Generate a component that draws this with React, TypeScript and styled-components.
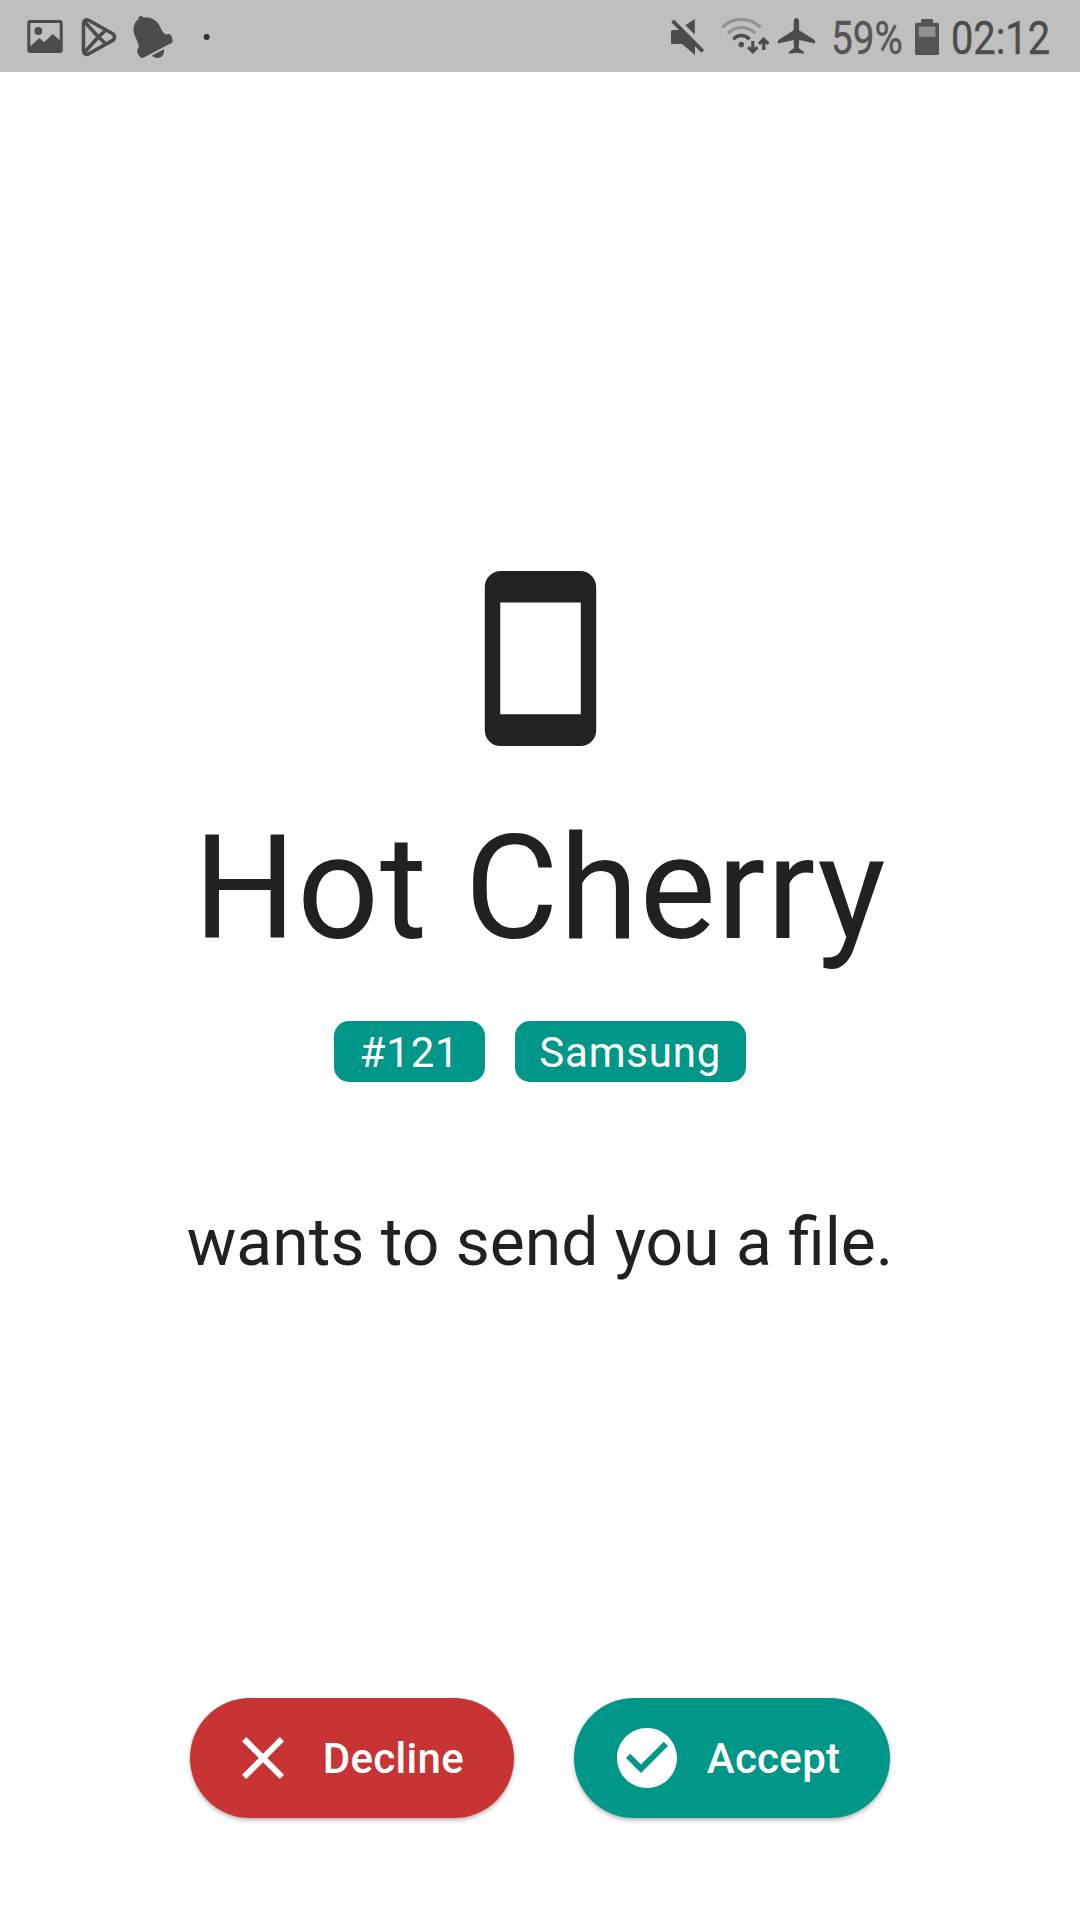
import React from "react";
import styled, { createGlobalStyle } from "styled-components";

const GlobalStyle = createGlobalStyle`
  *, *::before, *::after { box-sizing: border-box; }
  body { margin: 0; background: #fff; }
`;

const Screen = styled.div`
  width: 1080px;
  height: 1920px;
  display: flex;
  flex-direction: column;
  background: #fff;
  color: #212121;
  font-family: Roboto, "Liberation Sans", sans-serif;
  overflow: hidden;
`;

const StatusBar = styled.header`
  height: 72px;
  flex: none;
  display: flex;
  justify-content: space-between;
  padding: 0 30px 0 24px;
  background: #bfbfbf;
  color: #4c4c4c;
`;

const StatusGroup = styled.div`
  display: flex;
  align-items: center;
`;

const StatusGlyph = styled.svg`
  display: block;
  flex: none;
  height: 72px;
`;

const StatusText = styled.span<{ $width: number; $color: string }>`
  width: ${(p) => p.$width}px;
  height: 72px;
  flex: none;
  white-space: nowrap;
  font-size: 46px;
  line-height: 76px;
  color: ${(p) => p.$color};
  -webkit-text-stroke: 0.4px ${(p) => p.$color};
`;

const Condensed = styled.span<{ $scale: number }>`
  display: inline-block;
  transform: scaleX(${(p) => p.$scale});
  transform-origin: 0 50%;
`;

const Content = styled.main`
  flex: 1;
  display: flex;
  flex-direction: column;
  align-items: center;
  padding: 491px 0 102px;
`;

const DeviceIcon = styled.svg`
  display: block;
  flex: none;
  width: 191px;
  height: 191px;
`;

const DeviceName = styled.h1`
  margin: 50px 0 0;
  font-size: 144px;
  font-weight: 400;
  line-height: 169px;
  letter-spacing: 0.9px;
  white-space: nowrap;
`;

const Tags = styled.div`
  display: flex;
  gap: 30px;
  margin-top: 48px;
`;

const Tag = styled.span<{ $width: number }>`
  width: ${(p) => p.$width}px;
  height: 61px;
  display: flex;
  align-items: center;
  justify-content: center;
  padding-top: 2px;
  border-radius: 15px;
  background: #009688;
  color: #fff;
  font-size: 42px;
  letter-spacing: 0.8px;
`;

const Message = styled.p`
  margin: 121px 0 0;
  font-size: 66px;
  line-height: 80px;
  white-space: nowrap;
`;

const Actions = styled.div`
  display: flex;
  gap: 60px;
  margin-top: auto;
`;

const ActionButton = styled.button<{ $color: string; $width: number }>`
  width: ${(p) => p.$width}px;
  height: 120px;
  display: flex;
  align-items: center;
  gap: 24px;
  padding: 0 0 0 36.5px;
  border: 0;
  border-radius: 60px;
  background: ${(p) => p.$color};
  color: #fff;
  font-family: inherit;
  font-size: 42px;
  font-weight: 500;
  letter-spacing: 0.3px;
  white-space: nowrap;
  box-shadow: 0 3px 4px rgba(0, 0, 0, 0.2), 0 1px 3px rgba(0, 0, 0, 0.12);
`;

const ActionIcon = styled.svg`
  display: block;
  flex: none;
  width: 72px;
  height: 72px;
`;

function NotificationIcons() {
  return (
    <>
      <StatusGlyph width="50" viewBox="24 0 50 72" fill="currentColor">
        <rect x="28.8" y="21.5" width="32.4" height="30" rx="1.2" fill="none" stroke="currentColor" strokeWidth="3" />
        <circle cx="38.3" cy="31" r="3.9" />
        <path d="M30 46.6 39.4 38l4.8 4.3 8.4-8.4 8.4 7.4V52H30z" />
      </StatusGlyph>
      <StatusGlyph width="54" viewBox="74 0 54 72" fill="none" stroke="currentColor" strokeWidth="3.6" strokeLinejoin="round">
        <path d="M83.5 23.4c0-3.3 2.6-4.4 5.2-3.1l23.6 13.2c3 1.7 3 5.4 0 7.1L88.7 53.8c-2.6 1.3-5.2.2-5.2-3.1z" />
        <path d="M84.6 21.8 98.4 37l8 7.5M84.6 52.2 98.4 37l8-7.5" />
      </StatusGlyph>
      <StatusGlyph width="62" viewBox="128 0 62 72" fill="currentColor">
        <path d="M138.4 19.2C137.8 15.4 142.7 15.2 143.3 17.6C149.8 16.6 156 19.2 159 24.8C161.6 29.8 162.6 32.6 165.6 34.3C167.2 34.9 168.6 33.4 170.2 34.6C171.4 36 172.8 39.2 172.6 41.2C172.3 43.2 170.5 43.6 168.6 44.5L145.6 56.4C143.4 57.8 141.4 58.7 139.8 56.8C138 54.6 136.8 52 137.2 50C137.8 48.2 139.2 47.4 138.6 45.4C137.8 42.4 136.8 40 135.2 36.6C132 29.4 133.8 22.2 138.4 19.2Z" />
        <path d="M151.9 55.6 164 49.2C164.9 53.4 162.3 57.7 157.9 57.9C155.2 58 153.2 57.2 151.9 55.6Z" />
      </StatusGlyph>
      <StatusGlyph width="34" viewBox="190 0 34 72">
        <circle cx="206.7" cy="37" r="3" fill="#333" />
      </StatusGlyph>
    </>
  );
}

function SystemIcons() {
  return (
    <>
      <StatusGlyph width="50" viewBox="664 0 50 72" fill="currentColor">
        <path d="M694.8 19v15.6l-9.4-9.4z" />
        <path d="M672.5 30h8L695 45v10L682 44h-9.5q-1.5 0-1.5-1.5v-11q0-1.5 1.5-1.5z" />
        <path d="M672.6 20.8 702.8 51.4" stroke="currentColor" strokeWidth="3.8" />
      </StatusGlyph>
      <StatusGlyph width="60" viewBox="714 0 60 72" fill="none" stroke="currentColor" strokeWidth="3.2">
        <path d="M722.2 27.3Q730.5 19.4 741.2 19.4T760.6 27.3" stroke="#919191" />
        <path d="M728 33.2Q733.7 27.5 741.5 27.5T755.4 33.2" stroke="#919191" />
        <path d="M733.4 39.3Q736.7 35.5 741.4 35.5T749.6 39.3" strokeWidth="3.5" />
        <circle cx="741.3" cy="44.6" r="2.8" fill="currentColor" stroke="none" />
        <path d="M752.8 41v11M748.2 47.2l4.6 4.6 4.6-4.6" />
        <path d="M763.7 50V39.4M759 43.9l4.7-4.6 4.7 4.6" />
      </StatusGlyph>
      <StatusGlyph width="57" viewBox="774 0 57 72" fill="currentColor">
        <path d="M796.4 18C798.1 18 799.1 19.8 799.1 22V30.2L813.5 39.3C815.3 40.5 815.2 41.6 815 43.4L799.3 40.1L798.6 48.1L803 51.2C804.1 52 804 52.7 803.8 53.8L796.4 52.7L789 53.8C788.8 52.7 788.7 52 789.8 51.2L794.2 48.1L793.5 40.1L777.9 43.4C777.7 41.6 777.6 40.5 779.4 39.3L793.7 30.2V22C793.7 19.8 794.7 18 796.4 18Z" />
      </StatusGlyph>
    </>
  );
}

function BatteryIcon() {
  return (
    <StatusGlyph width="42" viewBox="909 0 42 72">
      <path d="M916.5 22.7H921V20.3q0-1.3 1.3-1.3h9.4q1.3 0 1.3 1.3v2.4h4.5q1.5 0 1.5 1.5v29.3q0 1.5-1.5 1.5h-21q-1.5 0-1.5-1.5V24.2q0-1.5 1.5-1.5z" fill="#555" />
      <path d="M918.8 26.6h16.6v10.2h-16.6z" fill="#929292" />
    </StatusGlyph>
  );
}

export default function App() {
  return (
    <Screen>
      <GlobalStyle />
      <StatusBar>
        <StatusGroup>
          <NotificationIcons />
        </StatusGroup>
        <StatusGroup>
          <SystemIcons />
          <StatusText $width={78} $color="#555">
            <Condensed $scale={0.84}>59%</Condensed>
          </StatusText>
          <BatteryIcon />
          <StatusText $width={99} $color="#4c4c4c">
            <Condensed $scale={0.865}>02:12</Condensed>
          </StatusText>
        </StatusGroup>
      </StatusBar>
      <Content>
        <DeviceIcon viewBox="0 0 24 24" fill="#222">
          <path d="M17 1H7c-1.1 0-2 .9-2 2v18c0 1.1.9 2 2 2h10c1.1 0 2-.9 2-2V3c0-1.1-.9-2-2-2zm.06 18H6.94V4.96h10.12z" />
        </DeviceIcon>
        <DeviceName>Hot Cherry</DeviceName>
        <Tags>
          <Tag $width={150.5}>#121</Tag>
          <Tag $width={231}>Samsung</Tag>
        </Tags>
        <Message>wants to send you a file.</Message>
        <Actions>
          <ActionButton $color="#c83434" $width={324}>
            <ActionIcon viewBox="0 0 24 24" fill="currentColor">
              <path d="M19 6.41 17.59 5 12 10.59 6.41 5 5 6.41 10.59 12 5 17.59 6.41 19 12 13.41 17.59 19 19 17.59 13.41 12z" />
            </ActionIcon>
            Decline
          </ActionButton>
          <ActionButton $color="#009688" $width={315.5}>
            <ActionIcon viewBox="0 0 24 24" fill="currentColor">
              <path d="M12 2C6.48 2 2 6.48 2 12s4.48 10 10 10 10-4.48 10-10S17.52 2 12 2zm-2 15-5-5 1.41-1.41L10 14.17l7.59-7.59L19 8l-9 9z" />
            </ActionIcon>
            Accept
          </ActionButton>
        </Actions>
      </Content>
    </Screen>
  );
}
